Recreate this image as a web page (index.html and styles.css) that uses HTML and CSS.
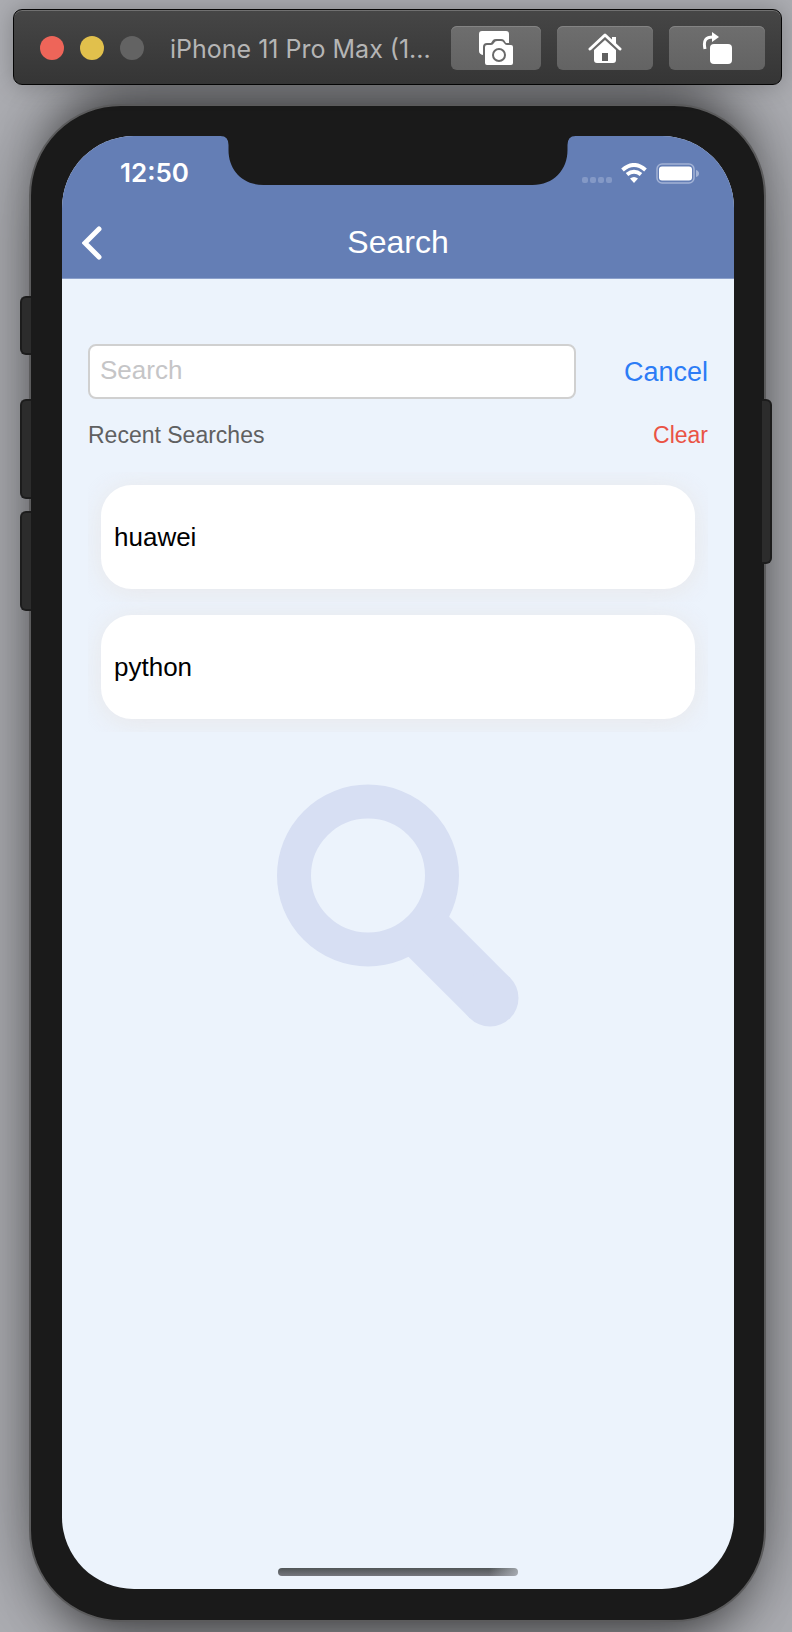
FILE: index.html
```html
<!DOCTYPE html>
<html lang="en">
<head>
<meta charset="utf-8">
<meta name="viewport" content="width=device-width, initial-scale=1">
<title>Search</title>
<link rel="stylesheet" href="styles.css">
</head>
<body>
<header class="titlebar">
  <div class="lights"><span class="light red"></span><span class="light yellow"></span><span class="light gray"></span></div>
  <div class="window-title">iPhone 11 Pro Max (1...</div>
  <div class="tools">
    <button class="tool tool-narrow" aria-label="Screenshot">
      <svg width="34" height="34" viewBox="0 0 34 34"><path fill="#fff" d="M3 0H27Q30 0 30 3V12H27L25 9Q24 8 22 8H17Q15 8 14 9L12 12H8Q4 12 4 16V24Q0 23 0 20V3Q0 0 3 0Z"/><path fill="#fff" d="M8 14H12Q14 14 15 12Q16 10 18 10H22Q24 10 25 12Q26 14 28 14H32Q34 14 34 16V32Q34 34 32 34H8Q6 34 6 32V16Q6 14 8 14Z"/><circle cx="20" cy="24" r="6" fill="none" stroke="#696969" stroke-width="2"/></svg>
    </button>
    <button class="tool" aria-label="Home">
      <svg width="34" height="32" viewBox="0 0 34 32"><path d="M2 17 17 3 32 17" fill="none" stroke="#fff" stroke-width="3" stroke-linecap="round" stroke-linejoin="round"/><path fill="#fff" d="M24 5H28V13L24 9ZM17 8 28 18V28Q28 31 25 31H9Q6 31 6 28V18Z"/><path fill="#606060" d="M14 21H20V29H14Z"/></svg>
    </button>
    <button class="tool" aria-label="Rotate">
      <svg width="30" height="34" viewBox="0 0 30 34"><path d="M3 18C1 9 4 6 11 6" fill="none" stroke="#fff" stroke-width="3"/><path fill="#fff" d="M10 1 17 6 10 11Z"/><rect x="8" y="13" width="22" height="20" rx="4" fill="#fff"/></svg>
    </button>
  </div>
</header>

<div class="phone">
  <span class="side mute"></span><span class="side vol-up"></span><span class="side vol-down"></span><span class="side power"></span>
  <main class="screen">
    <svg class="notch" width="355" height="49" viewBox="0 0 355 49"><path fill="#1a1a1a" d="M0 0Q8 0 8 9V14C8 34 22 49 43 49H312C333 49 347 34 347 14V9Q347 0 355 0Z"/></svg>
    <div class="header">
      <div class="status">
        <span class="time">12:50</span>
        <div class="indicators">
          <svg width="30" height="20" viewBox="0 0 30 20" fill="#8499c6"><rect y="14" width="6" height="6" rx="2"/><rect x="8" y="14" width="6" height="6" rx="2"/><rect x="16" y="14" width="6" height="6" rx="2"/><rect x="24" y="14" width="6" height="6" rx="2"/></svg>
          <svg width="26" height="20" viewBox="0 0 26 20"><g fill="none" stroke="#fff" stroke-width="4"><path d="M1.500 7Q13-3 24.500 7"/><path d="M6 11.500Q13 6 20 11.500"/></g><path fill="#fff" d="M13 20 9 15.500Q13 12.500 17 15.500Z"/></svg>
          <svg width="43" height="21" viewBox="0 0 43 21"><rect x="1" y="1" width="37" height="19" rx="5" fill="none" stroke="#a2b2d5" stroke-width="1.500"/><rect x="3" y="3.500" width="33" height="14" rx="3" fill="#fff"/><path fill="#a2b2d5" d="M40 7Q43 8 43 10.500T40 14Z"/></svg>
        </div>
      </div>
      <nav class="nav">
        <button class="back" aria-label="Back"><svg width="20" height="34" viewBox="0 0 20 34"><path d="M17 3 3 17 17 31" fill="none" stroke="#fff" stroke-width="5" stroke-linecap="round"/></svg></button>
        <h1 class="title">Search</h1>
      </nav>
    </div>
    <div class="content">
      <div class="search-row">
        <input class="search" type="text" placeholder="Search" aria-label="Search">
        <button class="cancel">Cancel</button>
      </div>
      <div class="recent-row">
        <h2 class="recent">Recent Searches</h2>
        <button class="clear">Clear</button>
      </div>
      <ul class="list">
        <li class="item"><button class="card">huawei</button></li>
        <li class="item"><button class="card">python</button></li>
      </ul>
      <svg class="glass" width="242" height="243" viewBox="0 0 242 243" fill="none" stroke="#d7dff3"><circle cx="91" cy="91.500" r="74" stroke-width="34"/><path d="M145 146 213 214" stroke-width="57"/><circle cx="213" cy="214" r="28.500" fill="#d7dff3" stroke="none"/></svg>
    </div>
    <div class="home-bar"></div>
  </main>
</div>
</body>
</html>
```
FILE: styles.css
```css
* { box-sizing: border-box; }
body {
  margin: 0;
  min-height: 100vh;
  padding: 9px 0 10px;
  display: flex;
  flex-direction: column;
  overflow-x: hidden;
  background: #acadb2;
  font-family: "Liberation Sans", Arial, sans-serif;
}
button { border: 0; padding: 0; background: none; font: inherit; }
svg { display: block; flex: none; }

.titlebar {
  position: relative;
  z-index: 1;
  margin: 0 10px 0 13px;
  height: 76px;
  padding: 2px 16px 0 26px;
  display: flex;
  align-items: center;
  border: 1px solid #050505;
  border-radius: 9px;
  background: linear-gradient(#464646, #353535);
  box-shadow: inset 0 1px 0 #707070, 0 0 24px rgba(0, 0, 0, .25);
}
.lights { display: flex; gap: 16px; }
.light { width: 24px; height: 24px; border-radius: 50%; }
.red { background: #ee6559; }
.yellow { background: #e1c04c; }
.gray { background: #636363; }
.window-title {
  flex: 1;
  min-width: 0;
  margin-left: 26px;
  padding-top: 2px;
  overflow: hidden;
  white-space: nowrap;
  color: #b5b5b5;
  font: 25px/32px Inter, sans-serif;
}
.tools { display: flex; gap: 16px; }
.tool {
  width: 96px;
  height: 44px;
  display: flex;
  align-items: center;
  justify-content: center;
  border-radius: 6px;
  background: linear-gradient(#6e6e6e, #636363);
  box-shadow: inset 0 1px 0 #848484;
}
.tool-narrow { width: 90px; }

.phone {
  position: relative;
  flex: 1;
  display: flex;
  margin: 19px 26px 0 29px;
  padding: 30px 30px 31px 31px;
  border: 2px solid #5b5b5c;
  border-radius: 92px;
  background: #1a1a1a;
  box-shadow: 0 0 70px rgba(0, 0, 0, .42), 0 40px 50px -30px rgba(0, 0, 0, .5), 0 -40px 50px -30px rgba(0, 0, 0, .5);
}
.side {
  position: absolute;
  left: -11px;
  width: 11px;
  height: 100px;
  border: 2px solid #1c1c1c;
  border-right: 0;
  border-radius: 6px 0 0 6px;
  background: #2c2c2c;
}
.mute { top: 190px; height: 59px; }
.vol-up { top: 293px; }
.vol-down { top: 405px; }
.power {
  top: 293px;
  left: auto;
  right: -8px;
  width: 10px;
  height: 165px;
  border-right: 2px solid #1c1c1c;
  border-left: 0;
  border-radius: 0 6px 6px 0;
}
.screen {
  position: relative;
  flex: 1;
  min-width: 0;
  display: flex;
  flex-direction: column;
  overflow: hidden;
  border-radius: 72px;
  background: #ecf3fc;
}
.notch { position: absolute; top: 0; left: 50%; transform: translateX(-50%); }
.header { background: #647eb5; border-bottom: 1px solid #8ba0cb; }
.status {
  height: 72px;
  padding: 2px 35px 0 58px;
  display: flex;
  align-items: center;
  justify-content: space-between;
  color: #fff;
}
.time { font: 600 26px/32px Inter, sans-serif; }
.indicators { display: flex; align-items: center; gap: 9px; }
.nav {
  height: 70px;
  padding: 0 20px;
  display: grid;
  grid-template-columns: 1fr auto 1fr;
  align-items: center;
}
.back { justify-self: start; }
.title { margin: 0; padding-bottom: 2px; color: #fff; font-size: 32px; font-weight: 400; line-height: 40px; }

.content { flex: 1; padding: 65px 26px 0; }
.search-row { display: flex; align-items: center; gap: 48px; }
.search {
  flex: 1;
  min-width: 0;
  height: 55px;
  padding: 0 10px 2px;
  border: 2px solid #d0d0d0;
  border-radius: 8px;
  background: #fff;
  color: #000;
  font: 26px/32px "Liberation Sans", Arial, sans-serif;
}
.search::placeholder { color: #c5c5c7; opacity: 1; }
.cancel { color: #2c7cf6; font-size: 27px; line-height: 32px; }
.recent-row {
  margin: 20px 0 21px;
  display: flex;
  align-items: center;
  justify-content: space-between;
  font-size: 23px;
  line-height: 32px;
}
.recent { margin: 0; color: #5f6061; font-size: 23px; font-weight: 400; }
.clear { color: #ea5345; }
.list { margin: 0; padding: 0; list-style: none; }
.item { padding: 13px; overflow: hidden; }
.card {
  display: block;
  width: 100%;
  height: 104px;
  padding: 0 13px;
  border-radius: 31px;
  background: #fff;
  box-shadow: 0 3px 26px rgba(230, 224, 220, .6);
  color: #000;
  font-size: 26px;
  text-align: left;
}
.glass { margin: 52px auto 40px; }
.home-bar {
  width: 240px;
  height: 8px;
  margin: 0 auto 13px;
  border-radius: 4px;
  background: linear-gradient(90deg, transparent 88%, rgba(190, 195, 202, .7)), linear-gradient(#505557, #74767d);
}
```
